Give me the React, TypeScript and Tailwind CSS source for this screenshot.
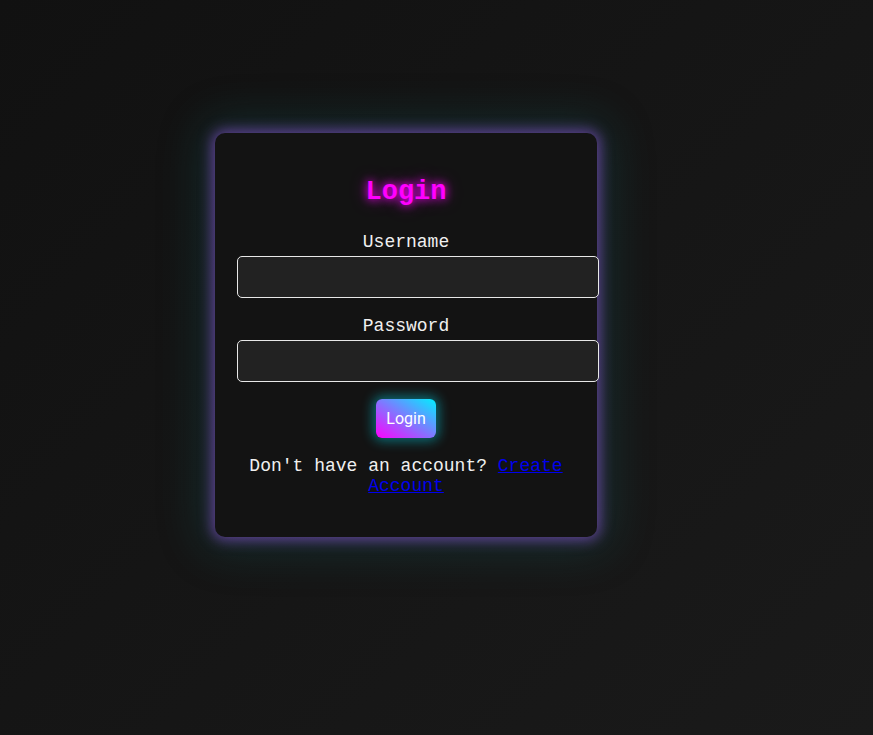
export default function App() {
  return (
    <div className="min-h-[735px] bg-[linear-gradient(135deg,#111111,#1a1a1a)] pl-[215px] pt-[133px] font-['Liberation_Mono','Courier_New',monospace] text-[18px] text-[#f0f0f0]">
      <div className="w-[382px] rounded-[10px] bg-[#131313] pb-[41px] pl-[22px] pt-[38px] text-center shadow-[0_0_14px_3px_rgba(130,80,200,0.7),0_0_44px_14px_rgba(20,110,110,0.25)]">
        <h2 className="mb-[19px] w-[338px] text-[27px] font-bold leading-[42px] text-[#ff00ff] [text-shadow:0_0_8px_#ff00ff,0_0_16px_rgba(255,0,255,0.5)]">
          Login
        </h2>
        <form className="w-[338px]">
          <label className="block leading-[20px]">Username</label>
          <input
            type="text"
            className="mt-[4px] block h-[42px] w-[362px] rounded-[5px] border border-[#e8e8e8] bg-[#222222] px-[10px] outline-none"
          />
          <label className="mt-[18px] block leading-[20px]">Password</label>
          <input
            type="password"
            className="mt-[4px] block h-[42px] w-[362px] rounded-[5px] border border-[#e8e8e8] bg-[#222222] px-[10px] outline-none"
          />
          <button
            type="button"
            className="mx-auto mt-[17px] block h-[39px] w-[60px] rounded-[6px] bg-[linear-gradient(to_top_right,#ff00ff,#00f0ff)] font-['Roboto','Liberation_Sans',sans-serif] text-[16px] text-white shadow-[0_0_12px_3px_rgba(0,220,240,0.45)]"
          >
            Login
          </button>
          <p className="mx-auto mt-[18px] w-[320px] leading-[20px]">
            Don't have an account?{" "}
            <a href="#" className="text-[#0000ee] underline">
              Create Account
            </a>
          </p>
        </form>
      </div>
    </div>
  );
}
